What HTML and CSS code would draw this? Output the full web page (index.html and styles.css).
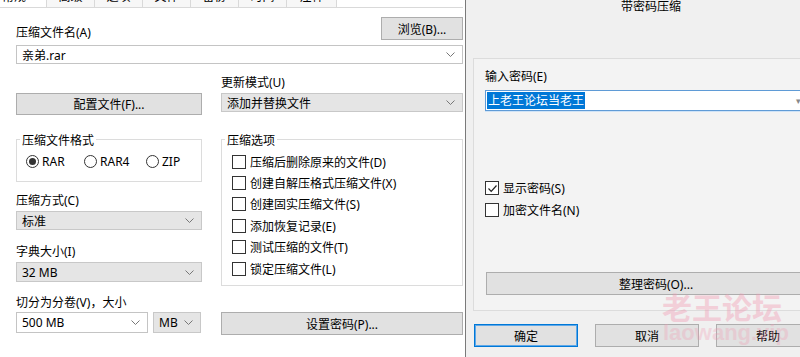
FILE: index.html
```html
<!DOCTYPE html>
<html lang="zh-CN">
<head>
    <meta charset="UTF-8">
    <title>带密码压缩</title>
    <link rel="stylesheet" href="styles.css">
</head>
<body>
<div class="left">
    <div class="tabs">
        <div class="tab active"><span>常规</span></div>
        <div class="tab"><span>高级</span></div>
        <div class="tab"><span>选项</span></div>
        <div class="tab"><span>文件</span></div>
        <div class="tab"><span>备份</span></div>
        <div class="tab"><span>时间</span></div>
        <div class="tab last"><span>注释</span></div>
    </div>

    <div class="page">
        <div class="row-name">
            <div class="label name-label">压缩文件名(A)</div>
            <button class="btn browse">浏览(B)...</button>
        </div>
        <div class="combo white name-combo">
            <span>亲弟.rar</span>
            <svg class="chev" width="9" height="5" viewBox="0 0 9 5"><polyline points="0.5,0.5 4.5,4.5 8.5,0.5" fill="none" stroke="#777" stroke-width="1"/></svg>
        </div>

        <div class="cols">
            <div class="col">
                <button class="btn profile">配置文件(F)...</button>

                <div class="group format">
                    <div class="group-title">压缩文件格式</div>
                    <div class="radios">
                        <div class="radio-item w58"><span class="radio on"></span>RAR</div>
                        <div class="radio-item w62"><span class="radio"></span>RAR4</div>
                        <div class="radio-item"><span class="radio"></span>ZIP</div>
                    </div>
                </div>

                <div class="label lbl-method">压缩方式(C)</div>
                <div class="combo gray method">
                    <span>标准</span>
                    <svg class="chev" width="9" height="5" viewBox="0 0 9 5"><polyline points="0.5,0.5 4.5,4.5 8.5,0.5" fill="none" stroke="#777" stroke-width="1"/></svg>
                </div>

                <div class="label lbl-dict">字典大小(I)</div>
                <div class="combo gray dict">
                    <span>32 MB</span>
                    <svg class="chev" width="9" height="5" viewBox="0 0 9 5"><polyline points="0.5,0.5 4.5,4.5 8.5,0.5" fill="none" stroke="#777" stroke-width="1"/></svg>
                </div>

                <div class="label lbl-split">切分为分卷(V)，大小</div>
                <div class="split">
                    <div class="combo white vol">
                        <span>500 MB</span>
                        <svg class="chev" width="9" height="5" viewBox="0 0 9 5"><polyline points="0.5,0.5 4.5,4.5 8.5,0.5" fill="none" stroke="#777" stroke-width="1"/></svg>
                    </div>
                    <div class="combo gray unit">
                        <span>MB</span>
                        <svg class="chev" width="9" height="5" viewBox="0 0 9 5"><polyline points="0.5,0.5 4.5,4.5 8.5,0.5" fill="none" stroke="#777" stroke-width="1"/></svg>
                    </div>
                </div>
            </div>

            <div class="col">
                <div class="label lbl-update">更新模式(U)</div>
                <div class="combo gray update">
                    <span>添加并替换文件</span>
                    <svg class="chev" width="9" height="5" viewBox="0 0 9 5"><polyline points="0.5,0.5 4.5,4.5 8.5,0.5" fill="none" stroke="#777" stroke-width="1"/></svg>
                </div>

                <div class="group options">
                    <div class="group-title">压缩选项</div>
                    <div class="checks">
                        <div class="check-item"><span class="box"></span>压缩后删除原来的文件(D)</div>
                        <div class="check-item"><span class="box"></span>创建自解压格式压缩文件(X)</div>
                        <div class="check-item"><span class="box"></span>创建固实压缩文件(S)</div>
                        <div class="check-item"><span class="box"></span>添加恢复记录(E)</div>
                        <div class="check-item"><span class="box"></span>测试压缩的文件(T)</div>
                        <div class="check-item"><span class="box"></span>锁定压缩文件(L)</div>
                    </div>
                </div>

                <button class="btn setpass">设置密码(P)...</button>
            </div>
        </div>
    </div>
</div>

<div class="dialog">
    <div class="dialog-title">带密码压缩</div>
    <div class="panel">
        <div class="label lbl-pass">输入密码(E)</div>
        <div class="pass-input">
            <span class="selected">上老王论坛当老王</span>
            <span class="pass-arrow">▾</span>
        </div>
        <div class="pass-checks">
            <div class="check-item"><span class="box">
                <svg width="11" height="11" viewBox="0 0 11 11"><polyline points="1.5,5.5 4.2,8.3 9.5,2.5" fill="none" stroke="#222" stroke-width="1.2"/></svg>
            </span>显示密码(S)</div>
            <div class="check-item"><span class="box"></span>加密文件名(N)</div>
        </div>
        <button class="btn organize">整理密码(O)...</button>
    </div>
    <div class="dialog-buttons">
        <button class="btn dlg default">确定</button>
        <button class="btn dlg">取消</button>
        <button class="btn dlg">帮助</button>
    </div>

    <div class="watermark">
        <div class="wm-big">老王论坛</div>
        <div class="wm-small">laowang.vip</div>
    </div>
</div>
</body>
</html>
```

FILE: styles.css
```css
:root {
    --text-color: #000;
    --dialog-bg: #f0f0f0;
    --button-bg: #e1e1e1;
    --button-border: #adadad;
    --group-border: #dcdcdc;
    --accent: #0078d7;
}

body, html {
    margin: 0;
    padding: 0;
}

body {
    width: 800px;
    height: 357px;
    overflow: hidden;
    display: flex;
    font-family: 'Noto Sans', 'Noto Sans CJK SC', sans-serif;
    font-size: 12px;
    color: var(--text-color);
    background: white;
}

button {
    font-family: inherit;
    font-size: 12px;
    color: var(--text-color);
    padding: 0;
}

.label {
    height: 14px;
    line-height: 14px;
    white-space: nowrap;
}

/* ---------- left window (general tab) ---------- */

.left {
    width: 465px;
    flex-shrink: 0;
    height: 357px;
    background: white;
}

.tabs {
    display: flex;
    height: 8px;
    overflow: hidden;
    border-bottom: 1px solid #d9d9d9;
    margin-right: 2px;
    box-sizing: border-box;
}

.tab {
    width: 47px;
    height: 8px;
    border-right: 1px solid #d9d9d9;
    background: #f7f7f7;
    text-align: center;
    flex-shrink: 0;
}

.tab span {
    display: block;
    line-height: 14px;
    margin-top: -10px;
}

.tab.active {
    background: white;
    width: 46px;
    margin-bottom: -1px;
    text-align: left;
}

.tab.active span {
    margin-left: 2px;
}

.tab.last {
    width: 49px;
}

.page {
    padding: 8px 2px 0 16px;
}

.row-name {
    display: flex;
    justify-content: space-between;
    height: 25px;
}

.name-label {
    margin-top: 10px;
}

.btn {
    background: var(--button-bg);
    border: 1px solid var(--button-border);
    box-sizing: border-box;
    text-align: center;
    cursor: default;
}

.browse {
    width: 82px;
    height: 23px;
    margin-top: 1px;
}

.combo {
    display: flex;
    align-items: center;
    justify-content: space-between;
    box-sizing: border-box;
    border: 1px solid #b9b9b9;
    padding: 0 7px 0 5px;
    white-space: nowrap;
}

.combo.white {
    background: white;
    border-color: #c4c4c4;
}

.combo.gray {
    background: #e5e5e5;
    border-color: #c8c8c8;
}

.chev {
    flex-shrink: 0;
}

.name-combo {
    margin-top: 4px;
    height: 19px;
}

.cols {
    display: grid;
    grid-template-columns: 186px 242px;
    column-gap: 19px;
}

.col {
    display: flex;
    flex-direction: column;
}

.profile {
    margin-top: 29px;
    height: 22px;
}

.group {
    border: 1px solid var(--group-border);
    box-sizing: border-box;
}

.group-title {
    width: fit-content;
    background: white;
    line-height: 14px;
    margin: -6px 0 0 3px;
    padding: 0 2px;
}

.format {
    margin-top: 24px;
    height: 43px;
}

.radios {
    display: flex;
    margin-top: 7px;
    padding-left: 9px;
}

.radio-item {
    display: flex;
    align-items: center;
    gap: 3px;
    height: 13px;
}

.w58 {
    width: 58px;
}

.w62 {
    width: 62px;
}

.radio {
    width: 13px;
    height: 13px;
    box-sizing: border-box;
    border: 1px solid #333;
    border-radius: 50%;
    background: white;
    display: flex;
    align-items: center;
    justify-content: center;
}

.radio.on::after {
    content: "";
    width: 7px;
    height: 7px;
    border-radius: 50%;
    background: #333;
}

.lbl-method {
    margin-top: 12px;
}

.method {
    margin-top: 3px;
    height: 19px;
}

.lbl-dict {
    margin-top: 15px;
}

.dict {
    margin-top: 3px;
    height: 20px;
}

.lbl-split {
    margin-top: 14px;
}

.split {
    display: flex;
    gap: 5px;
    margin-top: 2px;
}

.vol {
    width: 132px;
    height: 21px;
}

.unit {
    width: 48px;
    height: 21px;
}

.lbl-update {
    margin-top: 12px;
}

.update {
    margin-top: 3px;
    height: 19px;
}

.options {
    margin-top: 27px;
    height: 147px;
}

.checks {
    margin-top: 3px;
    padding-left: 10px;
}

.check-item {
    display: flex;
    align-items: center;
    gap: 4px;
    height: 21.4px;
    white-space: nowrap;
}

.box {
    width: 14px;
    height: 14px;
    box-sizing: border-box;
    border: 1px solid #333;
    background: white;
    display: flex;
    align-items: center;
    justify-content: center;
    flex-shrink: 0;
}

.setpass {
    margin-top: 26px;
    height: 23px;
}

/* ---------- password dialog ---------- */

.dialog {
    position: relative;
    flex: 1;
    height: 357px;
    background: var(--dialog-bg);
    border-left: 1px solid #7a7a7a;
    overflow: hidden;
}

.dialog-title {
    height: 14px;
    line-height: 14px;
    padding-left: 155px;
    white-space: nowrap;
}

.panel {
    margin: 44px -20px 0 7px;
    height: 253px;
    box-sizing: border-box;
    border: 1px solid var(--group-border);
    background: #f3f3f3;
    padding: 11px 0 0 11px;
}

.pass-input {
    margin-top: 6px;
    height: 21px;
    box-sizing: border-box;
    border: 1px solid #5f9bd6;
    box-shadow: 0 1px 0 #cfe3f7;
    background: white;
    display: flex;
    align-items: center;
    justify-content: space-between;
    padding: 0 17px 0 1px;
}

.selected {
    background: var(--accent);
    color: white;
    line-height: 17px;
    padding: 0 1px;
}

.pass-arrow {
    color: #888;
    font-size: 9px;
}

.pass-checks {
    margin-top: 66px;
}

.pass-checks .check-item {
    height: 22px;
}

.organize {
    display: block;
    width: 340px;
    height: 23px;
    margin-top: 51px;
    margin-left: 1px;
}

.dialog-buttons {
    display: flex;
    gap: 17px;
    margin: 13px 0 0 8px;
}

.dlg {
    width: 104px;
    height: 23px;
    flex-shrink: 0;
}

.dlg.default {
    border: 1px solid var(--accent);
    box-shadow: inset 0 0 0 1px #5fa8e8;
}

.watermark {
    position: absolute;
    left: 196px;
    top: 288px;
    pointer-events: none;
    color: #f29ab2;
    opacity: 0.4;
    font-weight: bold;
    font-family: 'Noto Sans CJK SC', sans-serif;
}

.wm-big {
    font-size: 30px;
    line-height: 36px;
}

.wm-small {
    font-family: 'Liberation Sans', sans-serif;
    font-size: 22px;
    line-height: 22px;
    margin-top: -2px;
    margin-left: 1px;
    opacity: 0.75;
}
```
